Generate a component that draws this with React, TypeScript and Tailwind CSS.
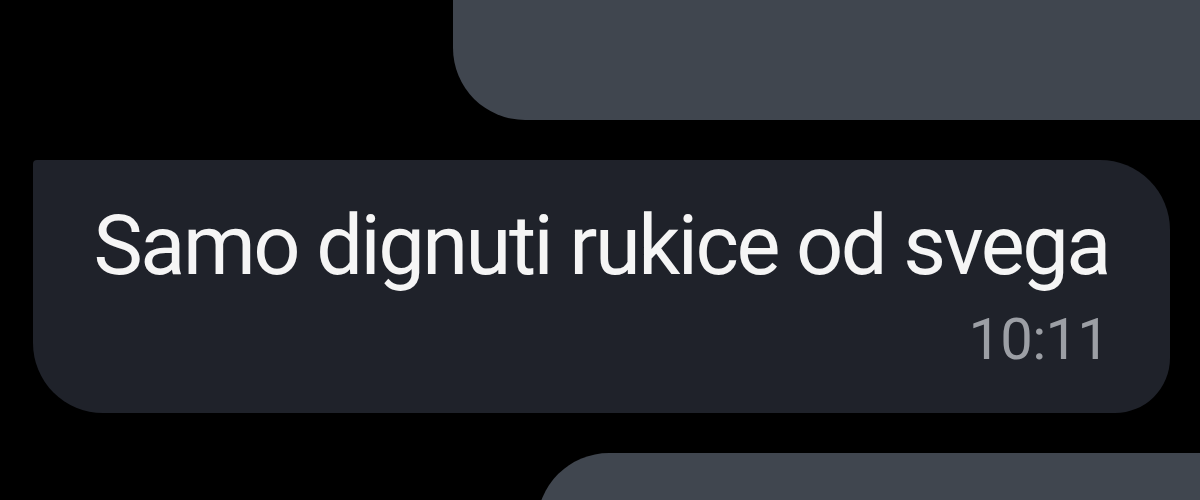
export default function App() {
  return (
    <div className="w-[1200px] h-[500px] overflow-hidden bg-black flex flex-col" style={{ fontFamily: 'Roboto, "Noto Sans", sans-serif' }}>
      <div className="ml-[453px] w-[800px] h-[120px] shrink-0 bg-[#40464f] rounded-bl-[72px]" />
      <div className="mt-[40px] ml-[33px] w-[1137px] h-[253px] shrink-0 bg-[#1f222a] rounded-tl-[4px] rounded-tr-[70px] rounded-br-[55px] rounded-bl-[70px] pt-[35px] pr-[61px] flex flex-col items-end">
        <div className="text-[83px] leading-[101px] tracking-[-2.5px] text-[#f5f5f5] whitespace-nowrap">Samo dignuti rukice od svega</div>
        <div className="mt-[9px] text-[58px] leading-[69px] tracking-[-0.8px] text-[#9c9fa5]">10:11</div>
      </div>
      <div className="mt-[40px] ml-[537px] w-[800px] h-[200px] shrink-0 bg-[#40464f] rounded-tl-[72px]" />
    </div>
  );
}
